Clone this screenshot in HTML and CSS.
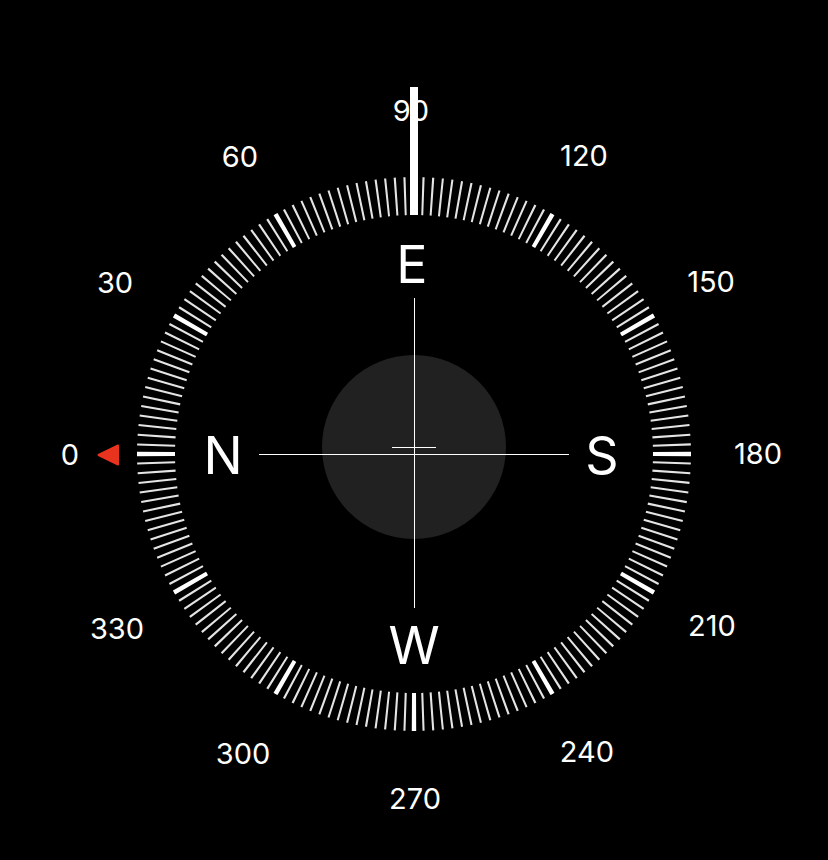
FILE: index.html
```html
<!DOCTYPE html>
<html lang="en">
<head>
<meta charset="utf-8">
<title>Compass</title>
<link rel="stylesheet" href="styles.css">
</head>
<body>
<main class="screen">
  <svg class="compass" viewBox="0 0 828 860" width="828" height="860" xmlns="http://www.w3.org/2000/svg">
    <!-- tick ring -->
    <circle class="ticks-minor" cx="414" cy="454" r="258" pathLength="360"></circle>
    <circle class="ticks-major" cx="414" cy="454" r="258" pathLength="360"></circle>

    <!-- degree labels -->
    <g class="deg">
      <text x="70" y="464.5">0</text>
      <text x="115" y="292.5">30</text>
      <text x="240" y="166.5">60</text>
      <text x="411" y="120.5">90</text>
      <text x="584" y="166">120</text>
      <text x="711" y="291.5">150</text>
      <text x="758" y="463.5">180</text>
      <text x="712" y="635.5">210</text>
      <text x="587" y="762">240</text>
      <text x="415" y="809">270</text>
      <text x="243" y="763.5">300</text>
      <text x="117" y="638.5">330</text>
    </g>

    <!-- heading bar -->
    <rect class="needle" x="410" y="87" width="8" height="128"></rect>

    <!-- cardinal letters -->
    <g class="card">
      <text x="223" y="473.5">N</text>
      <text x="412" y="283">E</text>
      <text x="602" y="473.5">S</text>
      <text x="414" y="664">W</text>
    </g>

    <!-- level bubble -->
    <circle class="bubble" cx="414" cy="447" r="92"></circle>
    <line class="hair" x1="259" y1="454.5" x2="569" y2="454.5"></line>
    <line class="hair" x1="414.5" y1="298" x2="414.5" y2="608"></line>
    <line class="hair" x1="392" y1="447.5" x2="436" y2="447.5"></line>

    <!-- red marker -->
    <polygon class="marker" points="98.5,455 118,445.5 118,464.5"></polygon>
  </svg>
</main>
</body>
</html>
```
FILE: styles.css
```css
html, body {
  margin: 0;
  padding: 0;
  background: #000;
}

.screen {
  width: 828px;
  height: 860px;
  background: #000;
  overflow: hidden;
}

.compass {
  display: block;
}

.ticks-minor {
  fill: none;
  stroke: #e4e4e4;
  stroke-width: 38px;
  stroke-dasharray: 0.46 1.54;
  stroke-dashoffset: 0.23;
}

.ticks-major {
  fill: none;
  stroke: #ffffff;
  stroke-width: 38px;
  stroke-dasharray: 0.95 29.05;
  stroke-dashoffset: 0.475;
}

.deg text {
  font-family: Inter, "Liberation Sans", sans-serif;
  font-size: 29px;
  font-weight: 400;
  fill: #ffffff;
  text-anchor: middle;
}

.card text {
  font-family: Inter, "Liberation Sans", sans-serif;
  font-size: 52px;
  font-weight: 400;
  fill: #ffffff;
  text-anchor: middle;
}

.needle {
  fill: #ffffff;
}

.bubble {
  fill: #212121;
}

.hair {
  stroke: #ffffff;
  stroke-width: 1px;
}

.marker {
  fill: #e8341f;
  stroke: #e8341f;
  stroke-width: 2px;
  stroke-linejoin: round;
}
```
